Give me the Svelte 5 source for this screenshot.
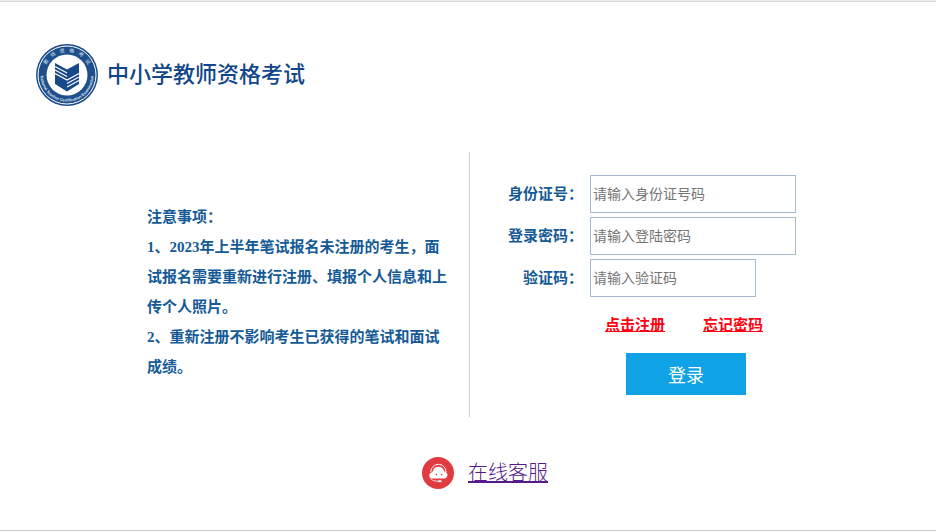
<script lang="ts">
  let idNumber = $state('');
  let password = $state('');
  let captcha = $state('');

  const notices = [
    '1、2023年上半年笔试报名未注册的考生，面试报名需要重新进行注册、填报个人信息和上传个人照片。',
    '2、重新注册不影响考生已获得的笔试和面试成绩。'
  ];

  function handleLogin(event: Event) {
    event.preventDefault();
  }
</script>

<div class="page">
  <header class="header">
    <svg class="logo" viewBox="0 0 62 62" aria-hidden="true">
      <defs>
        <path id="ring-top" d="M8 31a23 23 0 0 1 46 0" />
        <path id="ring-bottom" d="M5 26a26.500 26.500 0 1 0 52 0" />
      </defs>
      <circle cx="31" cy="31" r="31" fill="#1f4e8c" />
      <circle cx="31" cy="31" r="29" fill="none" stroke="#fff" stroke-width="1" />
      <circle cx="31" cy="31" r="20.500" fill="#fff" />
      <text class="ring-cn">
        <textPath href="#ring-top" startOffset="50%" text-anchor="middle">教&#160;&#160;&#160;师&#160;&#160;&#160;资&#160;&#160;&#160;格&#160;&#160;&#160;考&#160;&#160;&#160;试</textPath>
      </text>
      <text class="ring-en">
        <textPath href="#ring-bottom" startOffset="50%" text-anchor="middle">National Teacher Certification Examination</textPath>
      </text>
      <path d="M19 19l12 6.500L43 19v21l-12 7.500L19 40z" fill="#17488a" />
      <g fill="none" stroke="#fff">
        <path d="M19 22.500l12 6.500" stroke-width="1.200" />
        <path d="M19 26l12 6.500" stroke-width="1.200" />
        <path d="M19 29.500l12 6.500L43 29.500" stroke-width="1.400" />
        <path d="M31 39.500l12-6.500" stroke-width="1.200" />
        <path d="M31 43l12-6.500" stroke-width="1.200" />
      </g>
    </svg>
    <h1>中小学教师资格考试</h1>
  </header>

  <main class="main">
    <section class="notice">
      <div class="notice-text">
        <p>注意事项：</p>
        {#each notices as notice}
          <p>{notice}</p>
        {/each}
      </div>
    </section>

    <form class="login" onsubmit={handleLogin}>
      <div class="row">
        <label for="id-number">身份证号：</label>
        <input id="id-number" type="text" placeholder="请输入身份证号码" bind:value={idNumber} />
      </div>
      <div class="row">
        <label for="password">登录密码：</label>
        <input id="password" type="password" placeholder="请输入登陆密码" bind:value={password} />
      </div>
      <div class="row">
        <label for="captcha">验证码：</label>
        <input id="captcha" class="short" type="text" placeholder="请输入验证码" bind:value={captcha} />
      </div>
      <div class="links">
        <a href="#register">点击注册</a>
        <a href="#forgot">忘记密码</a>
      </div>
      <button type="submit" class="btn-login">登录</button>
    </form>
  </main>

  <footer class="service">
    <svg class="service-icon" viewBox="0 0 32 32" aria-hidden="true">
      <circle cx="16" cy="16" r="16" fill="#df3b40" />
      <path d="M8.800 15C9.400 4.800 23.400 4.800 24 15" fill="none" stroke="#fff" stroke-width="1" />
      <path
        d="M10.800 21.600c-4.600-.2-4.600-6.200-.4-6.400.6-3.600 3-5.400 6-5.400s5.200 2 5.800 4.800c4.400.2 4.400 6.800-.2 7z"
        fill="#fff"
      />
      <circle cx="14.400" cy="17.600" r="0.800" fill="#df3b40" />
      <circle cx="19.600" cy="17.600" r="0.800" fill="#df3b40" />
      <path d="M8 20.500c1.400 3 4.500 3.800 9 3.800" fill="none" stroke="#fff" stroke-width="0.800" />
      <rect x="16" y="23.200" width="3.600" height="2" rx="1" fill="#fff" />
    </svg>
    <a href="#service">在线客服</a>
  </footer>
</div>

<style>
  :global(body) {
    margin: 0;
    background: #fff;
  }

  .page {
    border-top: 1px solid #eee;
    border-bottom: 1px solid #ccc;
    font-family: 'Liberation Sans', 'Noto Sans CJK SC', sans-serif;
    color: #155a96;
  }

  .header {
    display: flex;
    align-items: center;
    gap: 9px;
    padding: 42px 36px 46px;
    border-top: 1px solid #d8d8d8;
  }

  .logo {
    width: 62px;
    height: 62px;
  }

  .ring-cn {
    font-size: 5px;
    fill: #dce6f2;
  }

  .ring-en {
    font-size: 4px;
    font-weight: bold;
    fill: #dce6f2;
  }

  h1 {
    margin: 0;
    font-size: 22px;
    line-height: 30px;
    font-weight: 500;
    color: #12468a;
  }

  .main {
    display: grid;
    grid-template-columns: 470fr 466fr;
  }

  .notice {
    display: flex;
    justify-content: flex-end;
    box-sizing: border-box;
    padding: 50px 22px 35px;
    border-right: 1px solid #ccc;
  }

  .notice-text {
    width: 300px;
    font-family: 'Liberation Serif', 'Noto Sans CJK SC', sans-serif;
    font-size: 15px;
    line-height: 30px;
    font-weight: bold;
  }

  p {
    margin: 0;
  }

  .login {
    padding: 23px 20px 22px 38px;
  }

  .row {
    display: flex;
    align-items: center;
    gap: 7px;
    margin-bottom: 4px;
  }

  label {
    width: 75px;
    font-size: 15px;
    line-height: 20px;
    font-weight: bold;
    text-align: right;
  }

  input {
    box-sizing: border-box;
    width: 206px;
    height: 38px;
    padding: 0 2px;
    border: 1px solid #a5bad0;
    font-family: inherit;
    font-size: 14px;
    color: #333;
  }

  input.short {
    width: 166px;
  }

  input::placeholder {
    color: #757575;
  }

  .links {
    display: flex;
    gap: 38px;
    margin: 18px 0 18px 97px;
    font-size: 15px;
    line-height: 20px;
    font-weight: bold;
  }

  .links a {
    color: #ff0010;
    text-underline-offset: 1px;
    text-decoration-skip-ink: none;
  }

  .btn-login {
    display: block;
    width: 120px;
    height: 42px;
    margin-left: 118px;
    padding: 0;
    border: none;
    background: #0fa2e4;
    color: #fff;
    font-family: inherit;
    font-size: 18px;
    cursor: pointer;
  }

  .service {
    display: flex;
    justify-content: center;
    align-items: center;
    gap: 14px;
    padding: 40px 0 41px 34px;
  }

  .service-icon {
    width: 32px;
    height: 32px;
  }

  .service a {
    font-size: 20px;
    line-height: 28px;
    font-weight: 300;
    color: #551a8b;
    text-decoration-skip-ink: none;
  }
</style>
